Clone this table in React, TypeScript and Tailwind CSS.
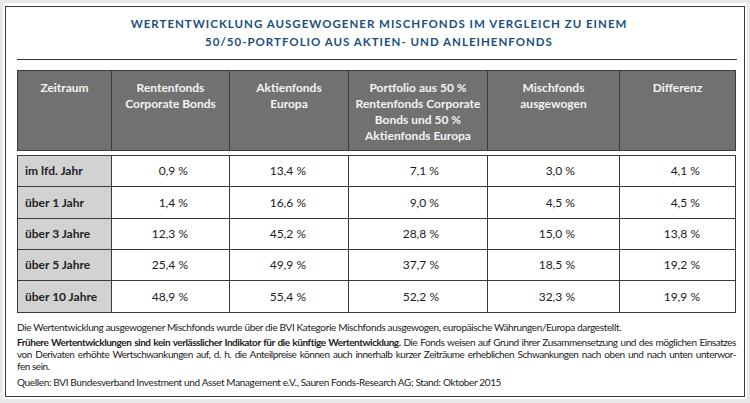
import React from 'react';

const headers: string[][] = [
  ['Zeitraum'],
  ['Rentenfonds', 'Corporate Bonds'],
  ['Aktienfonds', 'Europa'],
  ['Portfolio aus 50 %', 'Rentenfonds Corporate', 'Bonds und 50 %', 'Aktienfonds Europa'],
  ['Mischfonds', 'ausgewogen'],
  ['Differenz'],
];

const rows: string[][] = [
  ['im lfd. Jahr', '0,9 %', '13,4 %', '7,1 %', '3,0 %', '4,1 %'],
  ['über 1 Jahr', '1,4 %', '16,6 %', '9,0 %', '4,5 %', '4,5 %'],
  ['über 3 Jahre', '12,3 %', '45,2 %', '28,8 %', '15,0 %', '13,8 %'],
  ['über 5 Jahre', '25,4 %', '49,9 %', '37,7 %', '18,5 %', '19,2 %'],
  ['über 10 Jahre', '48,9 %', '55,4 %', '52,2 %', '32,3 %', '19,9 %'],
];

// padding right per value column so the numbers sit where the reference has them
const valuePad = ['pr-[41px]', 'pr-[42px]', 'pr-[48px]', 'pr-[44px]', 'pr-[35px]'];
const rowHeights = ['h-[31px]', 'h-[32px]', 'h-[31px]', 'h-[31px]', 'h-[32px]'];

const grid = 'grid grid-cols-[94px_118px_119px_139px_132px_116px]';
const sans = "font-['Lato',sans-serif]";

export default function App() {
  return (
    <div className="w-[750px] h-[403px] bg-[#e8e8e8] pt-[3px] pl-[3px]">
      <div className="w-[744px] h-[396px] bg-white pt-[3px] pl-[2px]">
        <div className="w-[740px] h-[391px] border border-[#3a3a3a] bg-white pl-[11px] pr-[7px] pt-[8px]">
          <h1 className={`${sans} font-bold text-[11.5px] tracking-[1px] leading-[18px] text-[#1d4f7c] text-center pl-[4px]`}>
            WERTENTWICKLUNG AUSGEWOGENER MISCHFONDS IM VERGLEICH ZU EINEM
            <br />
            50/50-PORTFOLIO AUS AKTIEN- UND ANLEIHENFONDS
          </h1>
          <div className="mt-[8px] h-px bg-[#333]" />

          <div className={`${grid} ${sans} mt-[10px] w-[719px] border-l border-t border-[#3a3a3a] bg-[#717171]`}>
            {headers.map((lines, i) => (
              <div
                key={i}
                className="h-[80px] border-r border-b border-[#3a3a3a] pt-[9px] text-center text-[12px] leading-[16px] font-bold text-[#f4f4f4]"
              >
                {lines.map((l, j) => (
                  <div key={j}>{l}</div>
                ))}
              </div>
            ))}
          </div>

          <div className={`${grid} ${sans} mt-[4px] w-[719px] border-l border-t border-[#3a3a3a] text-[12px] text-[#222]`}>
            {rows.map((row, r) =>
              row.map((cell, c) =>
                c === 0 ? (
                  <div
                    key={`${r}-${c}`}
                    className={`${rowHeights[r]} flex items-center border-r border-b border-[#3a3a3a] bg-[#d2d2d2] pl-[7px] font-bold`}
                  >
                    {cell}
                  </div>
                ) : (
                  <div
                    key={`${r}-${c}`}
                    className={`${rowHeights[r]} ${valuePad[c - 1]} flex items-center justify-end border-r border-b border-[#3a3a3a] bg-white`}
                  >
                    {cell}
                  </div>
                )
              )
            )}
          </div>

          <div className={`${sans} w-[719px] text-[10px] tracking-[-0.35px] leading-[12px] text-[#222] mt-[8px]`}>
            <p className="whitespace-nowrap">
              Die Wertentwicklung ausgewogener Mischfonds wurde über die BVI Kategorie Mischfonds ausgewogen,
              europäische Währungen/Europa dargestellt.
            </p>
            <div className="mt-[3px] tracking-[-0.45px]">
              <p className="whitespace-nowrap text-justify [text-align-last:justify]">
                <span className="font-bold">
                  Frühere Wertentwicklungen sind kein verlässlicher Indikator für die künftige Wertentwicklung.
                </span>{' '}
                Die Fonds weisen auf Grund ihrer Zusammensetzung und des möglichen Einsatzes
              </p>
              <p className="whitespace-nowrap text-justify [text-align-last:justify]">
                von Derivaten erhöhte Wertschwankungen auf, d. h. die Anteilpreise können auch innerhalb kurzer
                Zeiträume erheblichen Schwankungen nach oben und nach unten unterwor-
              </p>
              <p>fen sein.</p>
            </div>
            <p className="mt-[4px] whitespace-nowrap">
              Quellen: BVI Bundesverband Investment und Asset Management e.V., Sauren Fonds-Research AG; Stand: Oktober 2015
            </p>
          </div>
        </div>
      </div>
    </div>
  );
}
